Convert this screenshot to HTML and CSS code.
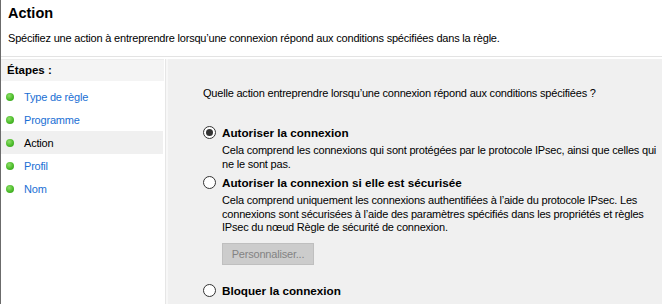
FILE: index.html
```html
<!DOCTYPE html>
<html lang="fr">
<head>
<meta charset="utf-8">
<link rel="stylesheet" href="styles.css">
</head>
<body>
<div class="win">
  <header class="head">
    <h1 class="title">Action</h1>
    <p class="sub">Spécifiez une action à entreprendre lorsqu’une connexion répond aux conditions spécifiées dans la règle.</p>
  </header>
  <div class="body">
    <nav class="steps">
      <div class="steps-head">Étapes :</div>
      <ul class="step-list">
        <li class="step"><span class="dot"></span><span class="link">Type de règle</span></li>
        <li class="step"><span class="dot"></span><span class="link">Programme</span></li>
        <li class="step current"><span class="dot"></span><span>Action</span></li>
        <li class="step"><span class="dot"></span><span class="link">Profil</span></li>
        <li class="step"><span class="dot"></span><span class="link">Nom</span></li>
      </ul>
    </nav>
    <main class="content">
      <p class="question">Quelle action entreprendre lorsqu’une connexion répond aux conditions spécifiées ?</p>
      <div class="option first">
        <div class="opt-label"><span class="radio checked"></span>Autoriser la connexion</div>
        <p class="desc">Cela comprend les connexions qui sont protégées par le protocole IPsec, ainsi que celles qui ne le sont pas.</p>
      </div>
      <div class="option second">
        <div class="opt-label"><span class="radio"></span>Autoriser la connexion si elle est sécurisée</div>
        <p class="desc">Cela comprend uniquement les connexions authentifiées à l’aide du protocole IPsec. Les connexions sont sécurisées à l’aide des paramètres spécifiés dans les propriétés et règles IPsec du nœud Règle de sécurité de connexion.</p>
        <button class="btn" disabled>Personnaliser...</button>
      </div>
      <div class="option third">
        <div class="opt-label"><span class="radio"></span>Bloquer la connexion</div>
      </div>
    </main>
  </div>
</div>
</body>
</html>
```
FILE: styles.css
```css
* { box-sizing: border-box; }
html, body { margin: 0; padding: 0; }
body {
  width: 662px;
  height: 304px;
  overflow: hidden;
  background: #ffffff;
  font-family: "Liberation Sans", Arial, sans-serif;
  font-size: 11px;
  letter-spacing: -0.2px;
  color: #000;
}
.win {
  height: 304px;
  display: flex;
  flex-direction: column;
  border-left: 1px solid #6b6b6b;
}
.head {
  height: 57px;
  padding: 4px 0 0 7px;
  border-bottom: 1px solid #e3e3e3;
}
.title {
  margin: 0;
  font-size: 14.5px;
  letter-spacing: 0;
  font-weight: bold;
  line-height: 18px;
}
.sub {
  margin: 9px 0 0;
  line-height: 15px;
}
.body {
  flex: 1;
  display: flex;
  padding-top: 2px;
  background: #fff;
}
.steps {
  width: 165px;
  border-right: 1px solid #e6e6e6;
  background: #fff;
}
.steps-head {
  height: 22px;
  margin-right: 1px;
  padding: 4px 0 0 6px;
  background: #f4f4f4;
  font-weight: bold;
  font-size: 11.5px;
  letter-spacing: 0;
  border-top: 1px solid #ececec;
}
.step-list {
  list-style: none;
  margin: 4px 0 0;
  padding: 0;
}
.step {
  height: 23px;
  display: flex;
  align-items: center;
  padding-left: 5px;
  margin-right: 2px;
}
.step.current { background: #f0f0f0; }
.dot {
  width: 8px;
  height: 8px;
  border-radius: 50%;
  background: radial-gradient(circle at 40% 35%, #8fe06a 0%, #4cbb2a 55%, #2f9a18 100%);
  margin-right: 10px;
}
.link { color: #1a6fd4; }
.content {
  flex: 1;
  background: #f0f0f0;
  border-left: 2px solid #f7f7f7;
  padding: 27px 0 0 35px;
}
.question { margin: 0; line-height: 14px; }
.first { margin-top: 24px; }
.second { margin-top: 3px; }
.third { margin-top: 17px; }
.opt-label {
  display: flex;
  align-items: center;
  font-weight: bold;
  font-size: 11.7px;
  letter-spacing: 0;
  line-height: 17px;
}
.radio {
  width: 13px;
  height: 13px;
  border: 1px solid #333;
  border-radius: 50%;
  background: #fff;
  margin-right: 6px;
  position: relative;
  flex: none;
}
.radio.checked::after {
  content: "";
  position: absolute;
  left: 2px;
  top: 2px;
  width: 7px;
  height: 7px;
  border-radius: 50%;
  background: #333;
}
.desc {
  margin: 3px 0 0 19px;
  line-height: 13.5px;
  width: 438px;
}
.btn {
  margin: 8px 0 0 19px;
  width: 92px;
  height: 22px;
  background: #cccccc;
  border: 1px solid #bfbfbf;
  color: #838383;
  font-family: inherit;
  font-size: 11px;
  letter-spacing: -0.2px;
  padding: 0;
}
```
